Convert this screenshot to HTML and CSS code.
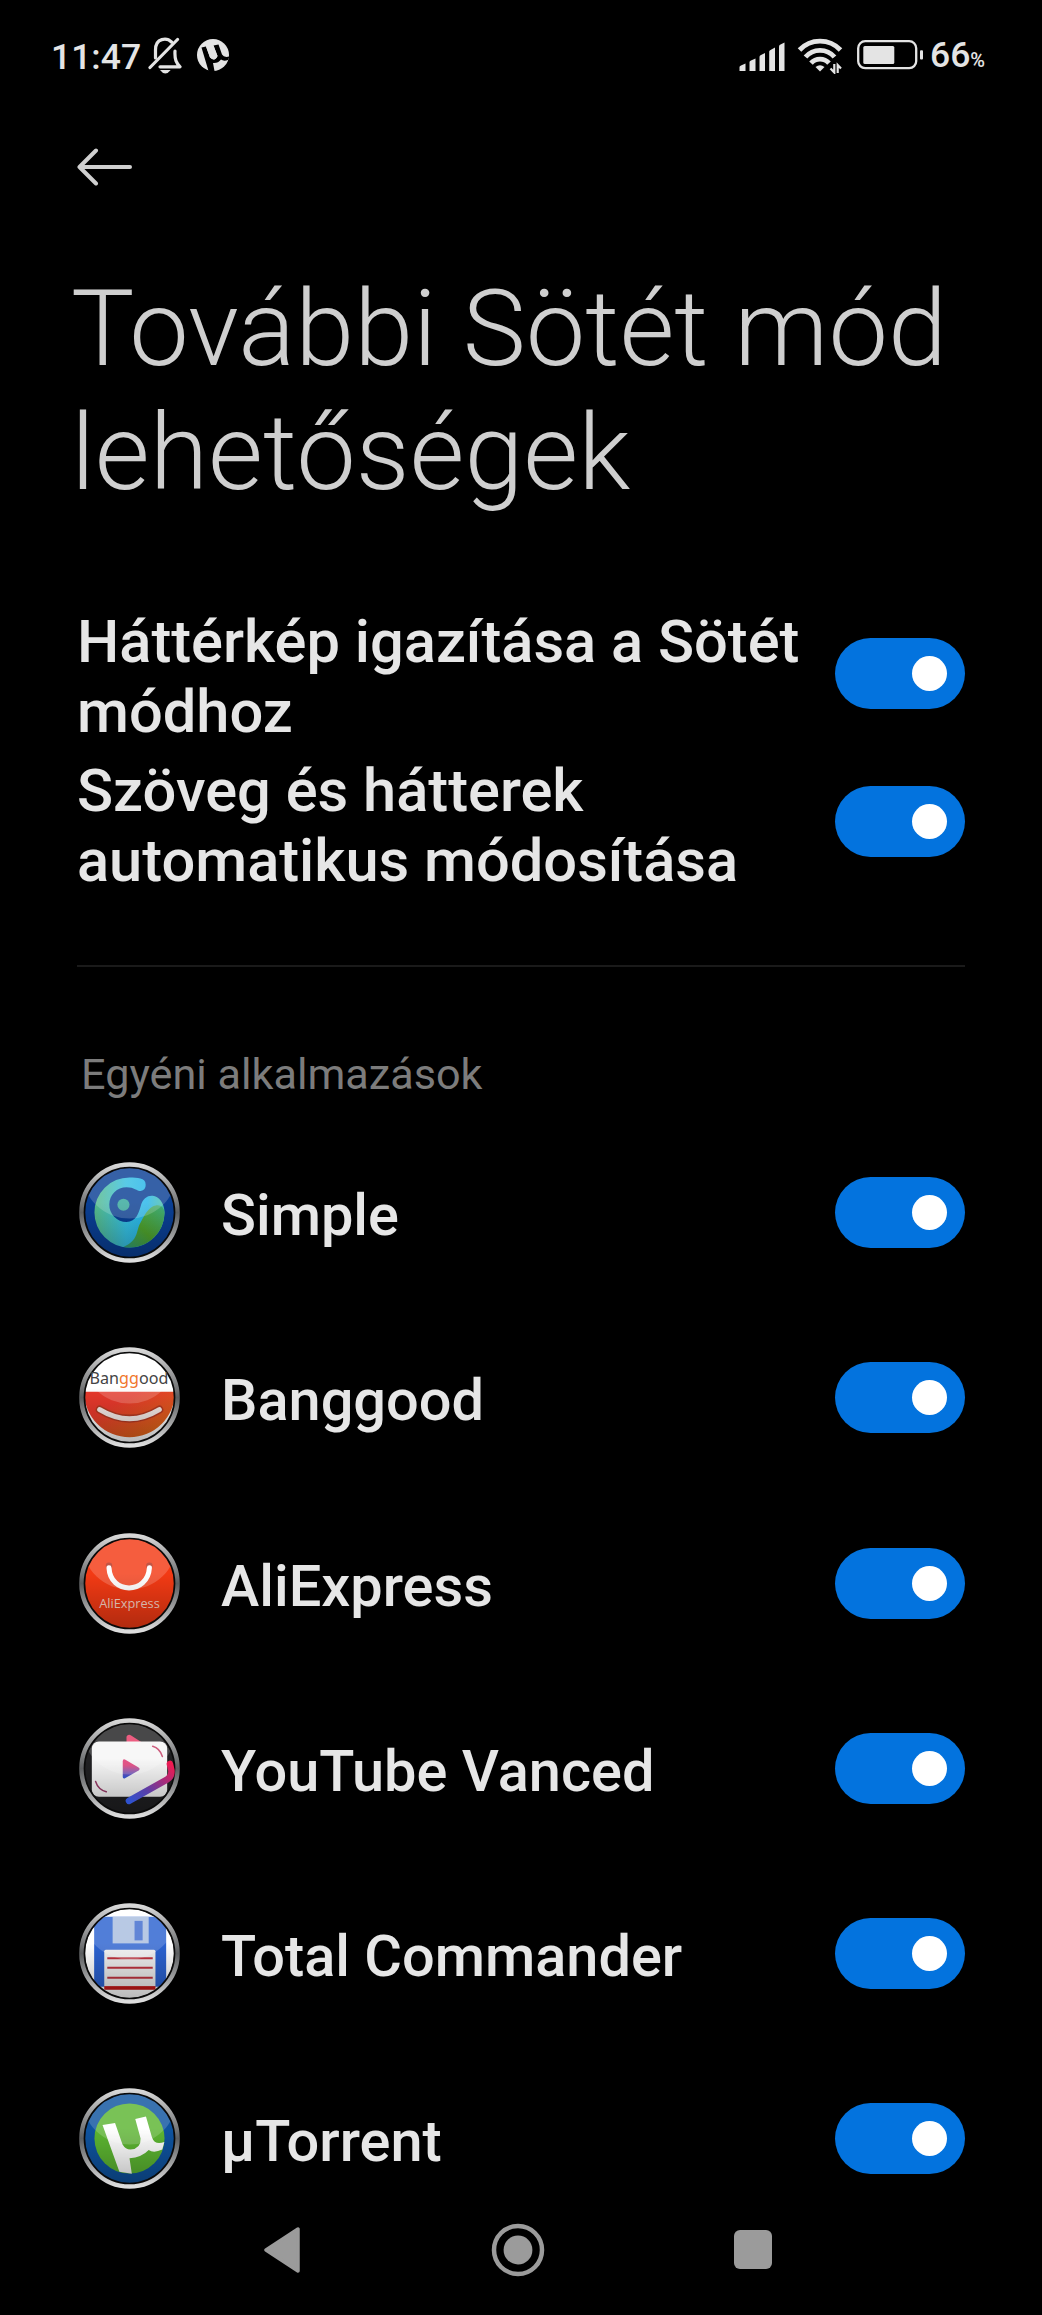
FILE: index.html
```html
<!DOCTYPE html>
<html lang="hu">
<head>
    <meta charset="UTF-8" />
    <meta name="viewport" content="width=device-width, initial-scale=1" />
    <title>További Sötét mód lehetőségek</title>
    <link rel="stylesheet" href="styles.css">
</head>
<body>

    <!-- Shared icon parts -->
    <svg class="defs" width="0" height="0">
        <defs>
            <linearGradient id="metal" x1="0" y1="0" x2="0" y2="1">
                <stop offset="0" stop-color="#d8d8d8" />
                <stop offset="0.5" stop-color="#5c5e60" />
                <stop offset="1" stop-color="#dedede" />
            </linearGradient>
            <linearGradient id="shade" x1="0" y1="0" x2="0" y2="1">
                <stop offset="0.4" stop-color="#000" stop-opacity="0" />
                <stop offset="1" stop-color="#000" stop-opacity="0.3" />
            </linearGradient>
            <linearGradient id="swirl" x1="0" y1="0.3" x2="1" y2="0.3">
                <stop offset="0" stop-color="#55b988" />
                <stop offset="0.45" stop-color="#35bfe2" />
                <stop offset="0.75" stop-color="#25b5ea" />
                <stop offset="1" stop-color="#4ec0a8" />
            </linearGradient>
            <linearGradient id="leaf" x1="0" y1="1" x2="1" y2="0">
                <stop offset="0" stop-color="#2fa07c" />
                <stop offset="0.45" stop-color="#4fa32c" />
                <stop offset="1" stop-color="#3fae7c" />
            </linearGradient>
            <linearGradient id="bang" x1="0" y1="0" x2="1" y2="1">
                <stop offset="0.3" stop-color="#e8392c" />
                <stop offset="1" stop-color="#dd7413" />
            </linearGradient>
            <linearGradient id="vanced" x1="0" y1="1" x2="1" y2="0">
                <stop offset="0" stop-color="#2f52cf" />
                <stop offset="0.35" stop-color="#5a3fa8" />
                <stop offset="1" stop-color="#f01a50" />
            </linearGradient>
            <linearGradient id="play" x1="0" y1="1" x2="0" y2="0">
                <stop offset="0.1" stop-color="#3b57d6" />
                <stop offset="0.7" stop-color="#e0306e" />
            </linearGradient>
            <clipPath id="disc"><circle cx="50" cy="50" r="44.3" /></clipPath>
            <g id="frame">
                <g clip-path="url(#disc)">
                    <rect width="100" height="100" fill="url(#shade)" />
                    <ellipse cx="50" cy="12" rx="46" ry="44" fill="#fff" fill-opacity="0.18" />
                </g>
                <circle cx="50" cy="50" r="44.8" fill="none" stroke="#0a0a0a" stroke-width="2" />
                <circle cx="50" cy="50" r="47.6" fill="none" stroke="url(#metal)" stroke-width="4.4" />
            </g>
            <path id="mu" d="M23.3 36.7 L35.7 34.7 L43 55.7 Q46 61 51 61 Q61.500 60 61 50 L55.700 30.700 L66.300 28.300 L72.300 49 Q75 57 84.500 53.500 L82.500 61 Q74 65 69 61.500 Q62 69 50 69.500 L52.300 85 L40 83 Z" />
        </defs>
    </svg>

    <div class="status-bar">
        <span class="clock">11:47</span>
        <svg class="bell" width="34" height="38" viewBox="0 0 34 38" fill="none" stroke="#e4e4e4" stroke-width="3.2" stroke-linecap="round" stroke-linejoin="round">
            <path d="M7.500 21 V13 C7.500 0.500 19 0.500 23.500 5" />
            <path d="M2 30.500 L29.500 2.500" />
            <path d="M27 14 C26.500 23 28.500 26 32 29.800 H12" />
            <path d="M12 33 H22.700 Q17.300 40 12 33 Z" fill="#e4e4e4" stroke="none" />
        </svg>
        <svg class="torrent" width="34" height="34" viewBox="0 0 34 34">
            <circle cx="17" cy="17" r="16" fill="#e4e4e4" />
            <path d="M5.500 9.500 L10 8.500 L14 19.500 Q19 24 21.500 18 L17.500 7.500 L22.500 6.500 L26 16.500 Q28 20 33.500 18.500 L32 22 Q27.500 23.500 25 21.500 Q22 25.500 17 25 L18.500 33 L12.500 33 Z" fill="#000" />
            <path d="M10 8.500 L17.500 7.500 L21.500 18 Q19 24 14 19.500 Z" fill="#e4e4e4" />
        </svg>
        <div class="status-right">
            <svg class="signal" width="46" height="29" viewBox="0 0 46 29" fill="#e4e4e4">
                <path d="M0.500 25 Q0.500 24 2 23.500 L6.500 21.500 V29 H0.500 Z" />
                <path d="M10.500 20 Q10.500 19 12 18.500 L16.500 16.500 V29 H10.500 Z" />
                <path d="M20.500 15 Q20.500 14 21.500 13.300 L26 11 V29 H20.500 Z" />
                <path d="M30.200 9.500 Q30.200 8.500 31.500 8 L36 5.500 V29 H30.200 Z" />
                <path d="M40 4.500 Q40 3.500 41 2.700 L45.500 0.500 V29 H40 Z" />
            </svg>
            <svg class="wifi" width="46" height="36" viewBox="0 0 46 36" fill="none" stroke="#e4e4e4" stroke-width="4.800">
                <path d="M2.500 12 A28 28 0 0 1 43.500 12" />
                <path d="M8.500 19 A19 19 0 0 1 37.500 19" />
                <path d="M14 25.200 A12 12 0 0 1 32 25.200" />
                <path d="M18.500 29 Q23 25.500 27.500 29 L23 33.500 Z" fill="#e4e4e4" stroke="none" />
                <path d="M37.300 26 V34.500 L33.500 30.500 M40.700 35 V27 L44 30.500" stroke-width="2.200" />
            </svg>
            <svg class="battery" width="66" height="30" viewBox="0 0 66 30">
                <rect x="1.200" y="1.200" width="58" height="27" rx="7" fill="none" stroke="#e4e4e4" stroke-width="2.300" />
                <rect x="6.300" y="6" width="31" height="18" rx="1.500" fill="#e4e4e4" />
                <rect x="63" y="10.300" width="3" height="9.200" rx="1" fill="#e4e4e4" />
            </svg>
            <span class="percent">66<small>%</small></span>
        </div>
    </div>

    <div class="top-bar">
        <svg width="56" height="38" viewBox="0 0 56 38" fill="none" stroke="#d0d0d0" stroke-width="4" stroke-linecap="round" stroke-linejoin="round">
            <path d="M53 19 H2.500 M19 2.500 L2.500 19 L19 35.500" />
        </svg>
    </div>

    <h1>További Sötét mód lehetőségek</h1>

    <div class="options">
        <div class="option">
            <span class="label">Háttérkép igazítása a Sötét módhoz</span>
            <span class="switch"></span>
        </div>
        <div class="option">
            <span class="label">Szöveg és hátterek automatikus módosítása</span>
            <span class="switch"></span>
        </div>
    </div>

    <h2>Egyéni alkalmazások</h2>

    <div class="apps">
        <div class="app">
            <svg class="app-icon" viewBox="0 0 100 100">
                <circle cx="50" cy="50" r="45" fill="#0a3f94" />
                <path d="M60.700 16.400 A6.300 6.300 0 0 1 61 28.800 C57 28.800 55 25 47 25 A17 17 0 0 0 30 42 A17 17 0 0 0 47 59.400 C57 59 59 50 61 44 C63 36 68 33 73 33.500 C79 34 84.700 41 84.700 50 A34.700 34.700 0 1 1 50 15.300 C54 15.300 58 15.500 60.700 16.400 Z" fill="url(#swirl)" />
                <path d="M44 84.200 C60 77 56 68 61 60 C66 50 70 44 76 43 C82 42 84.700 46 84.700 51 A34.700 34.700 0 0 1 44 84.200 Z" fill="url(#leaf)" />
                <circle cx="44" cy="42.300" r="6" fill="#35a99b" />
                <use href="#frame" />
            </svg>
            <span class="label">Simple</span>
            <span class="switch"></span>
        </div>
        <div class="app">
            <svg class="app-icon" viewBox="0 0 100 100">
                <circle cx="50" cy="50" r="45" fill="#fff" />
                <path d="M5 44.300 H95 A45 45 0 0 1 5 44.300 Z" fill="url(#bang)" />
                <path d="M20.500 62 Q50 80 79.500 62" fill="none" stroke="#b43a22" stroke-width="8" stroke-linecap="round" />
                <path d="M20.500 62 Q50 80 79.500 62" fill="none" stroke="#f6ece8" stroke-width="5" stroke-linecap="round" />
                <use href="#frame" />
                <text class="bang-text" x="10.500" y="36.300" textLength="78" lengthAdjust="spacingAndGlyphs">Ban<tspan fill="#f0762c">gg</tspan>ood</text>
            </svg>
            <span class="label">Banggood</span>
            <span class="switch"></span>
        </div>
        <div class="app">
            <svg class="app-icon" viewBox="0 0 100 100">
                <circle cx="50" cy="50" r="45" fill="#f33a14" />
                <circle cx="29.700" cy="32.500" r="3.200" fill="#b5301c" />
                <circle cx="69.700" cy="32.500" r="3.200" fill="#b5301c" />
                <path d="M29.700 34.500 C31 61 68 61 69.700 34.500" fill="none" stroke="#fff" stroke-width="5" stroke-linecap="round" />
                <text class="ali-text" x="20" y="74.500" textLength="60" lengthAdjust="spacingAndGlyphs">AliExpress</text>
                <use href="#frame" />
            </svg>
            <span class="label">AliExpress</span>
            <span class="switch"></span>
        </div>
        <div class="app">
            <svg class="app-icon" viewBox="0 0 100 100">
                <circle cx="50" cy="50" r="45" fill="#202022" />
                <path d="M47 24 V18.500 Q48.500 15.500 52 17.500 L62 24 Z" fill="#e83a66" />
                <rect x="12.700" y="23.300" width="74.600" height="54.700" rx="7" fill="#f6f6f6" />
                <path d="M43.300 43 Q43.300 40 46 41.300 L59 49 Q61 50.500 59 52 L46 59.500 Q43.300 61 43.300 58 Z" fill="url(#play)" />
                <path d="M73 28 Q80 30 82.500 38" fill="none" stroke="#c23a62" stroke-width="1.600" stroke-linecap="round" />
                <path d="M16.500 63 Q19 71 27 73" fill="none" stroke="#9a3a68" stroke-width="1.600" stroke-linecap="round" />
                <use href="#frame" />
                <path d="M49.500 82 L87 61 Q92 58 91.500 52 L90 45.500" fill="none" stroke="url(#vanced)" stroke-width="6.500" stroke-linecap="round" stroke-linejoin="round" />
            </svg>
            <span class="label">YouTube Vanced</span>
            <span class="switch"></span>
        </div>
        <div class="app">
            <svg class="app-icon" viewBox="0 0 100 100">
                <g clip-path="url(#disc)">
                    <rect width="100" height="100" fill="#fff" />
                    <path d="M15 13.700 H80 L86.300 20 V83 H15 Z" fill="#2b62d0" />
                    <rect x="33.300" y="13.700" width="35.700" height="26.300" fill="#a9bddf" />
                    <rect x="55" y="17.700" width="8" height="19.300" fill="#3f6bce" />
                    <rect x="25" y="46.300" width="50.700" height="37" rx="1.500" fill="#f0f0f0" />
                    <path d="M28 54.700 H73 M28 64 H73 M28 74 H73" stroke="#c03440" stroke-width="2" />
                    <rect x="25" y="82.300" width="50.700" height="3.600" fill="#c41818" />
                </g>
                <use href="#frame" />
            </svg>
            <span class="label">Total Commander</span>
            <span class="switch"></span>
        </div>
        <div class="app">
            <svg class="app-icon" viewBox="0 0 100 100">
                <circle cx="50" cy="50" r="45" fill="#0e539f" />
                <circle cx="50" cy="50" r="34.700" fill="#5cb531" />
                <use href="#mu" fill="#fff" />
                <use href="#frame" />
            </svg>
            <span class="label">µTorrent</span>
            <span class="switch"></span>
        </div>
    </div>

    <div class="nav-bar">
        <svg width="36" height="46" viewBox="0 0 36 46">
            <path d="M34 2 V44 L2 23 Z" fill="#9b9b9b" stroke="#9b9b9b" stroke-width="3.500" stroke-linejoin="round" />
        </svg>
        <svg width="54" height="54" viewBox="0 0 54 54">
            <circle cx="27" cy="27" r="24" fill="none" stroke="#9b9b9b" stroke-width="4.500" />
            <circle cx="27" cy="27" r="14.400" fill="#9b9b9b" />
        </svg>
        <span class="recents"></span>
    </div>

</body>
</html>
```

FILE: styles.css
```css
body {
    font-family: Roboto, 'Liberation Sans', sans-serif;
    background-color: #000;
    color: #e6e6e6;
    width: 1042px;
    height: 2315px;
    margin: 0;
    padding: 0;
    box-sizing: border-box;
    overflow: hidden;
    display: flex;
    flex-direction: column;
}

.defs {
    display: block;
    flex: none;
    height: 0;
}

/* status bar */
.status-bar {
    flex: none;
    display: flex;
    align-items: center;
    height: 112px;
    padding: 0 57px 0 51px;
    box-sizing: border-box;
    color: #e4e4e4;
    font-size: 35.5px;
    font-weight: 500;
    line-height: 42px;
}

.clock {
    width: 91px;
    padding-top: 2px;
    white-space: nowrap;
}

.bell {
    margin-left: 6px;
}

.torrent {
    margin-left: 14px;
    margin-top: -2px;
}

.status-right {
    display: flex;
    align-items: center;
    margin-left: auto;
}

.wifi {
    margin-left: 12px;
}

.battery {
    margin-left: 14px;
    margin-top: -2px;
}

.percent {
    margin-left: 7px;
    width: 55px;
    padding-top: 2px;
    white-space: nowrap;
}

.percent small {
    font-size: 20px;
}

.top-bar {
    flex: none;
    height: 110px;
    padding: 36px 77px 0;
    box-sizing: border-box;
}

.top-bar svg {
    display: block;
}

h1 {
    flex: none;
    margin: 45px 0 0;
    padding: 0 70px 0 71px;
    color: #cfcfcf;
    font-size: 106.2px;
    font-weight: 300;
    line-height: 124px;
}

/* options */
.options {
    flex: none;
    margin: 84px 77px 0;
    padding-bottom: 69px;
    border-bottom: 2px solid #1a1a1a;
}

.option, .app {
    display: flex;
    align-items: center;
}

.label {
    flex: 1;
    padding-top: 8px;
    font-size: 59.6px;
    font-weight: 500;
    line-height: 70.3px;
}

.switch {
    flex: none;
    display: flex;
    align-items: center;
    justify-content: flex-end;
    width: 130px;
    height: 71px;
    padding-right: 18px;
    box-sizing: border-box;
    border-radius: 36px;
    background-color: #0373de;
}

.switch::after {
    content: '';
    width: 35px;
    height: 35px;
    border-radius: 50%;
    background-color: #fff;
}

h2 {
    flex: none;
    margin: 82px 81px 0;
    color: #7c7c7c;
    font-size: 43.2px;
    font-weight: 400;
    line-height: 52px;
}

/* app list, the last row runs under the nav bar */
.apps {
    flex: 1;
    min-height: 0;
    margin: 19px 77px 0 79px;
}

.app {
    height: 185.2px;
}

.app .label {
    padding-top: 5px;
    font-size: 57.7px;
}

.app-icon {
    flex: none;
    width: 101px;
    height: 101px;
    margin-right: 41px;
}

.bang-text {
    font-family: 'Noto Sans', sans-serif;
    font-size: 16.5px;
    fill: #444;
}

.ali-text {
    font-family: 'Open Sans', sans-serif;
    font-size: 13px;
    fill: #fbd5c8;
}

.nav-bar {
    flex: none;
    display: flex;
    align-items: center;
    height: 131px;
    padding-left: 264px;
}

.nav-bar svg:nth-child(2) {
    margin-left: 191px;
}

.recents {
    width: 38px;
    height: 39px;
    margin-left: 189px;
    border-radius: 6px;
    background-color: #9b9b9b;
}
```
